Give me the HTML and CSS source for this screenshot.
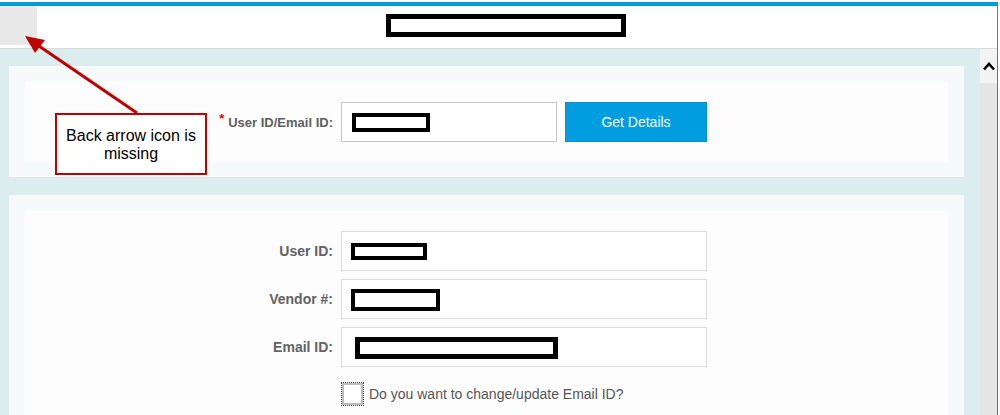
FILE: index.html
```html
<!DOCTYPE html>
<html lang="en">
<head>
    <meta charset="UTF-8">
    <meta name="viewport" content="width=device-width, initial-scale=1.0">
    <title>Vendor User Details</title>
    <link rel="stylesheet" href="styles.css">
</head>
<body>
    <div class="window">
        <div class="header">
            <div class="back-btn"></div>
            <div class="title-redact"></div>
        </div>

        <div class="main">
            <div class="content">
                <div class="card">
                    <div class="card-inner lookup">
                        <label class="field-label"><span class="req">*</span>User ID/Email ID:</label>
                        <div class="input input-dark"><span class="redact redact-lookup"></span></div>
                        <button class="btn-primary">Get Details</button>
                    </div>
                </div>

                <div class="card">
                    <div class="card-inner details">
                        <label class="field-label">User ID:</label>
                        <div class="input"><span class="redact redact-user"></span></div>

                        <label class="field-label">Vendor #:</label>
                        <div class="input"><span class="redact redact-vendor"></span></div>

                        <label class="field-label">Email ID:</label>
                        <div class="input input-email"><span class="redact redact-email"></span></div>

                        <div class="check-row">
                            <span class="checkbox"><span class="checkbox-box"></span></span>
                            <span class="check-text">Do you want to change/update Email ID?</span>
                        </div>
                    </div>
                </div>
            </div>

            <div class="scrollbar">
                <div class="scroll-up">
                    <svg width="12" height="9" viewBox="0 0 12 9">
                        <polyline points="1,7.5 6,2 11,7.5" fill="none" stroke="#000" stroke-width="2.6"/>
                    </svg>
                </div>
            </div>
        </div>

        <!-- review annotation -->
        <svg class="callout-arrow" width="200" height="130" viewBox="0 0 200 130">
            <line x1="137" y1="113" x2="36" y2="44" stroke="#c00000" stroke-width="3"/>
            <polygon points="25,36 45,40 35,53" fill="#c00000"/>
        </svg>
        <div class="callout">Back arrow icon is missing</div>
    </div>
</body>
</html>
```

FILE: styles.css
```css
html, body {
    margin: 0;
    padding: 0;
    background-color: #fff;
    overflow: hidden;
}
body {
    font-family: "Liberation Sans", Arial, sans-serif;
    width: 1000px;
    height: 415px;
}
.window {
    position: relative;
    width: 997px;
    height: 413px;
    margin-top: 2px;
    border-right: 1px solid #3e7fc3;
    overflow: hidden;
}
.header {
    display: flex;
    height: 42px;
    border-top: 4px solid #009ddb;
    border-bottom: 1px solid #d9dcdd;
    background-color: #fff;
}
.back-btn {
    width: 37px;
    height: 39px;
    background-color: #e8e8e8;
}
.title-redact {
    width: 230px;
    height: 13px;
    margin: 8px 0 0 349px;
    border: 5px solid #000;
    background-color: #fff;
}
.main {
    display: flex;
    height: 366px;
}
.content {
    width: 955px;
    padding: 17px 16px 0 9px;
    background-color: #dcedf0;
    overflow: hidden;
}
.card {
    background-color: #f6fafb;
    padding: 16px 16px 15px;
    border-bottom: 1px solid #e1e7e9;
    margin-bottom: 17px;
}
.card-inner {
    background-color: #fdfdfd;
    display: grid;
    column-gap: 8px;
    align-items: center;
}
.lookup {
    grid-template-columns: 308px 216px 142px;
    padding: 20px 0;
}
.details {
    grid-template-columns: 308px 366px;
    row-gap: 8px;
    padding-top: 20px;
    height: 220px;
    align-content: start;
}
.field-label {
    text-align: right;
    font-size: 13px;
    font-weight: bold;
    color: #5f5f5f;
}
.details .field-label {
    font-size: 14px;
    color: #626262;
}
.req {
    color: #e60000;
    font-size: 13px;
    position: relative;
    top: -4px;
    margin-right: 4px;
}
.input {
    height: 38px;
    border: 1px solid #dcdcdc;
    background-color: #fff;
    display: flex;
    align-items: center;
    padding-left: 9px;
}
.input-dark {
    border-color: #c6c6c6;
    padding-left: 10px;
}
.input-email {
    padding-left: 13px;
}
.redact {
    display: block;
    border: 4px solid #000;
    background-color: #fff;
    box-sizing: border-box;
}
.redact-lookup { width: 78px; height: 19px; }
.redact-user { width: 76px; height: 17px; }
.redact-vendor { width: 89px; height: 22px; margin-top: 1px; }
.redact-email { width: 203px; height: 22px; margin-top: 1px; border-width: 5px; }
.btn-primary {
    height: 40px;
    border: 1px solid #0b90cc;
    background-color: #009de0;
    color: #fff;
    font-family: "Liberation Sans", Arial, sans-serif;
    font-size: 14px;
    padding: 0;
}
.check-row {
    grid-column: 2;
    display: flex;
    align-items: center;
    gap: 5px;
    margin-top: 7px;
}
.checkbox {
    width: 21px;
    height: 22px;
    border: 1px dotted #1f4e86;
    display: flex;
    align-items: center;
    justify-content: center;
}
.checkbox-box {
    width: 21px;
    height: 22px;
    border: 2px solid #bdbdbd;
    background-color: #fff;
    box-sizing: border-box;
}
.check-text {
    font-size: 14px;
    color: #555;
}
.scrollbar {
    width: 17px;
    background-color: #e5e5e5;
}
.scroll-up {
    height: 34px;
    background-color: #f4f4f4;
    display: flex;
    align-items: center;
    justify-content: center;
}
.callout-arrow {
    position: absolute;
    left: 0;
    top: -2px;
}
.callout {
    position: absolute;
    left: 55px;
    top: 111px;
    width: 148px;
    height: 56px;
    border: 2px solid #c00000;
    background-color: #fff;
    color: #000;
    font-size: 16px;
    line-height: 18px;
    text-align: center;
    padding-top: 2px;
    display: flex;
    align-items: center;
    justify-content: center;
}
```
